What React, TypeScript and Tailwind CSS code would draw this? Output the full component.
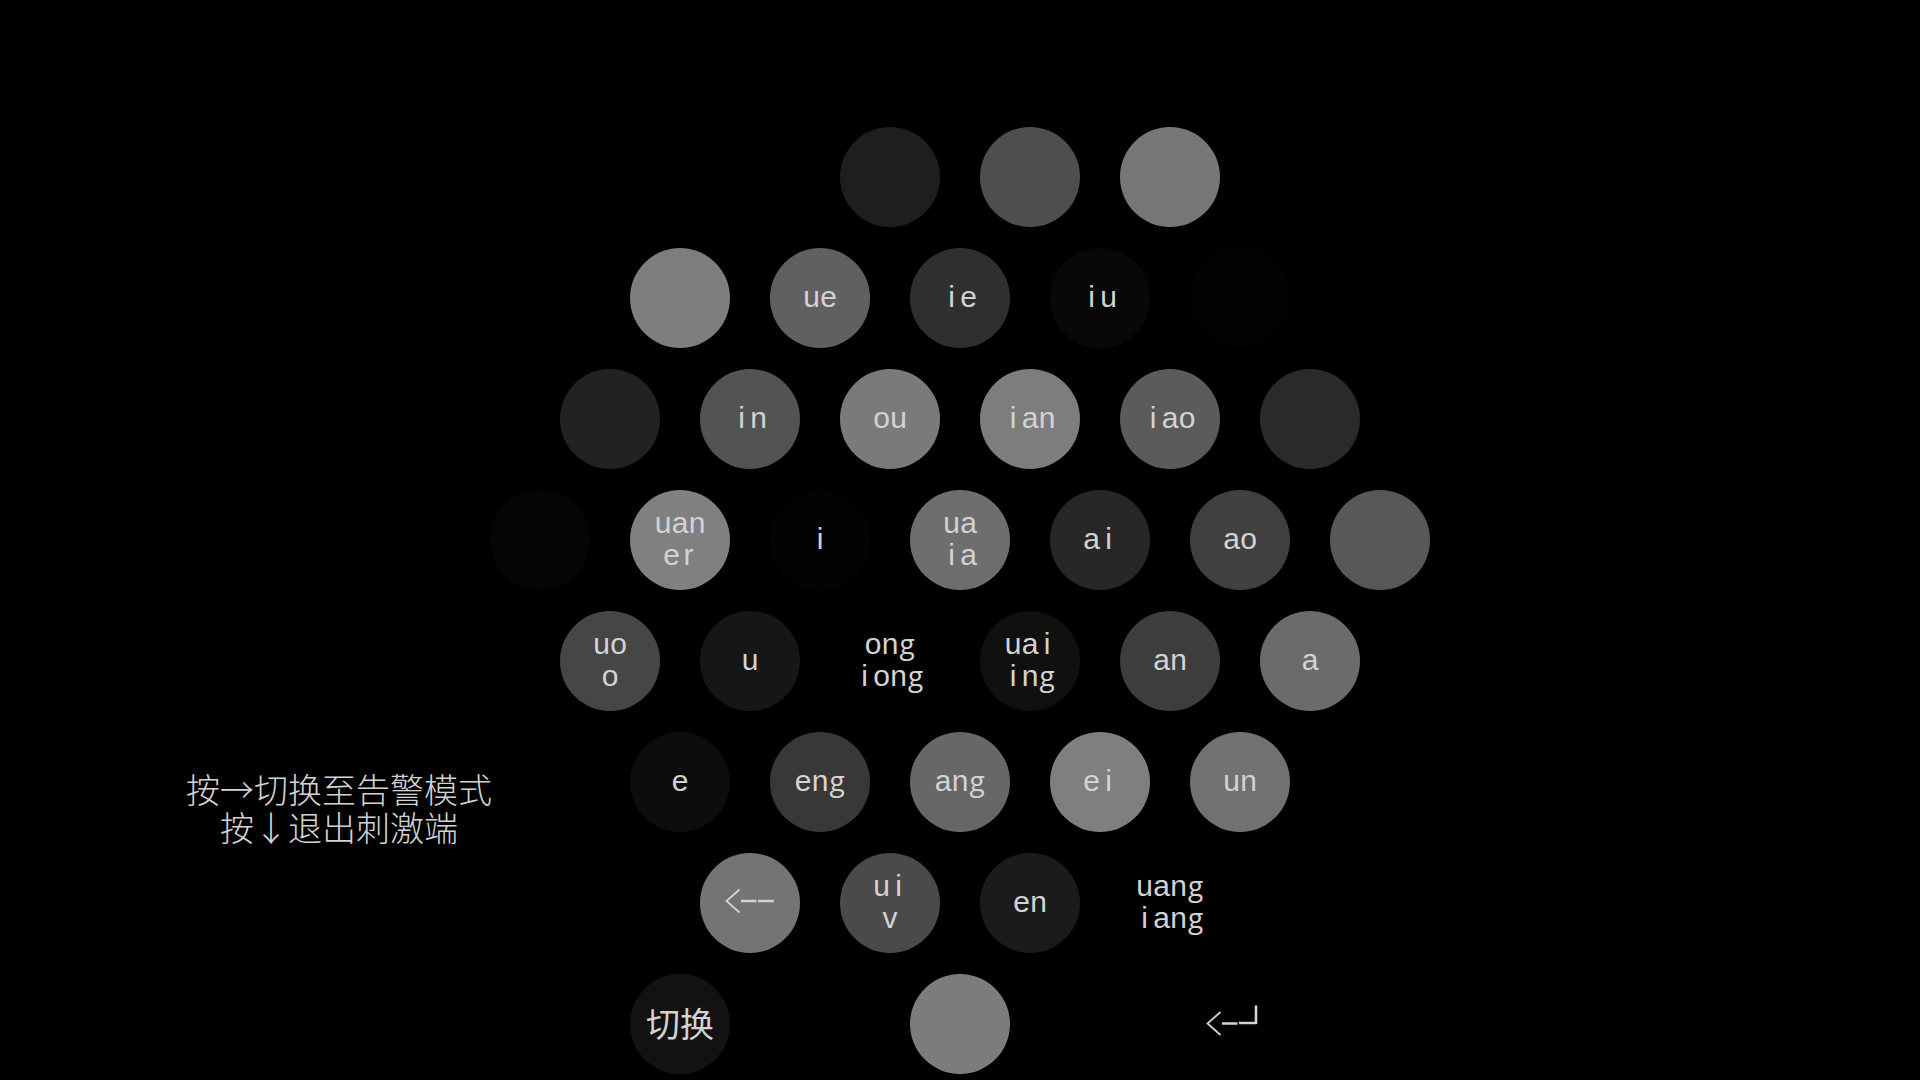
import type { ReactNode } from "react";

type Key = { name: string; tone: string; lines?: string[]; face?: ReactNode };

const k = (tone: string, ...lines: string[]): Key => ({
  tone,
  lines,
  name: lines.join(" ") || "空",
});

const BackspaceMark = () => (
  <svg width="50" height="26" viewBox="0 0 50 26" fill="none" stroke="currentColor" className="-mt-0.5" aria-hidden="true">
    <path d="M14.5 1.5 1.5 13 14.5 24.5" strokeWidth="1.8" />
    <path d="M16 13H31.5M33 13H49" strokeWidth="2.4" />
  </svg>
);

const EnterMark = () => (
  <svg width="70" height="36" viewBox="0 0 70 36" fill="none" stroke="currentColor" className="-mt-0.5" aria-hidden="true">
    <path d="M15.5 8 2.5 19.5 15.5 31" strokeWidth="1.8" />
    <path d="M17 19.5H32.5M34 19H51.5" strokeWidth="2.4" />
    <path d="M51 1.5V20" strokeWidth="2.6" />
  </svg>
);

const rows: Key[][] = [
  [k("bg-[#010101]"), k("bg-[#1e1e1e]"), k("bg-[#4e4e4e]"), k("bg-[#777777]")],
  [k("bg-[#7e7e7e]"), k("bg-[#606060]", "ue"), k("bg-[#2f2f2f]", "ie"), k("bg-[#080808]", "iu"), k("bg-[#020202]")],
  [
    k("bg-[#222222]"),
    k("bg-[#535353]", "in"),
    k("bg-[#7a7a7a]", "ou"),
    k("bg-[#7d7d7d]", "ian"),
    k("bg-[#5b5b5b]", "iao"),
    k("bg-[#2a2a2a]"),
  ],
  [
    k("bg-[#050505]"),
    k("bg-[#808080]", "uan", "er"),
    k("bg-[#030303]", "i"),
    k("bg-[#6e6e6e]", "ua", "ia"),
    k("bg-[#272727]", "ai"),
    k("bg-[#404040]", "ao"),
    k("bg-[#585858]"),
  ],
  [
    k("bg-[#464646]", "uo", "o"),
    k("bg-[#161616]", "u"),
    k("bg-black", "ong", "iong"),
    k("bg-[#101010]", "uai", "ing"),
    k("bg-[#3d3d3d]", "an"),
    k("bg-[#6b6b6b]", "a"),
  ],
  [
    k("bg-[#0d0d0d]", "e"),
    k("bg-[#383838]", "eng"),
    k("bg-[#676767]", "ang"),
    k("bg-[#7f7f7f]", "ei"),
    k("bg-[#717171]", "un"),
  ],
  [
    { name: "退格", tone: "bg-[#747474]", face: <BackspaceMark /> },
    k("bg-[#4a4a4a]", "ui", "v"),
    k("bg-[#1b1b1b]", "en"),
    k("bg-[#010101]", "uang", "iang"),
  ],
];

const commands: Key[] = [
  {
    name: "切换",
    tone: "bg-[#121212]",
    face: <span className="font-['Noto_Sans_CJK_SC',sans-serif] text-[34px] leading-8">切换</span>,
  },
  k("bg-[#7c7c7c]"),
  { name: "回车", tone: "bg-black", face: <EnterMark /> },
];

/* Every letter takes a cell of the same width, as in a monospaced face. */
function Letters({ text }: { text: string }) {
  return (
    <span className="flex h-8 items-baseline whitespace-nowrap">
      {[...text].map((c, i) => (
        <span
          key={i}
          className={
            c === "g"
              ? "w-[17px] text-center font-['Open_Sans',sans-serif] text-[28px] leading-7"
              : "w-[17px] text-center"
          }
        >
          {c}
        </span>
      ))}
    </span>
  );
}

function KeyButton({ item }: { item: Key }) {
  return (
    <button
      type="button"
      aria-label={item.name}
      className={`flex size-[100px] shrink-0 flex-col items-center justify-center rounded-full pb-0.5 ${item.tone}`}
    >
      {item.face ?? item.lines?.map((line) => <Letters key={line} text={line} />)}
    </button>
  );
}

export default function App() {
  return (
    <main className="grid min-h-screen grid-cols-[1fr_auto_1fr] content-start bg-black pt-[127px] font-['Liberation_Sans',sans-serif] text-[30px] leading-8 text-[#d3d3d3]">
      <p className="-mr-0.5 mb-[228px] self-end justify-self-end text-center font-['Noto_Sans_CJK_SC',sans-serif] text-[34px] leading-[38px] font-light whitespace-nowrap">
        按→切换至告警模式
        <br />
        按↓退出刺激端
      </p>
      <div className="flex flex-col items-center gap-[21px]">
        {rows.map((row, r) => (
          <div key={r} className="flex gap-10">
            {row.map((item, i) => (
              <KeyButton key={i} item={item} />
            ))}
          </div>
        ))}
        <div className="flex gap-[180px]">
          {commands.map((item) => (
            <KeyButton key={item.name} item={item} />
          ))}
        </div>
      </div>
    </main>
  );
}
